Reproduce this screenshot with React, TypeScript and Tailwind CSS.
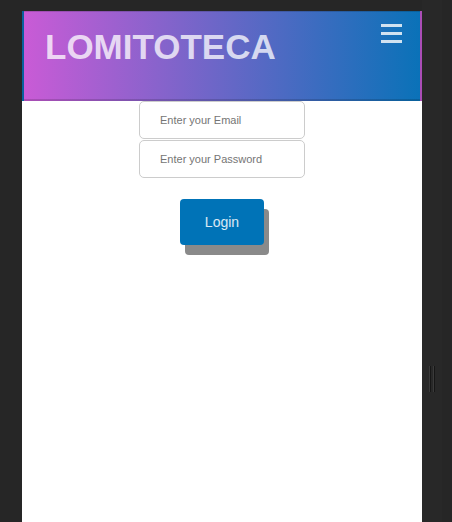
import React from "react";

export default function App() {
  return (
    <div
      className="flex w-[452px] h-[522px] overflow-hidden bg-[#262626]"
      style={{ fontFamily: '"Liberation Sans", Arial, sans-serif' }}
    >
      <div className="w-[22px] shrink-0" />
      <div className="w-[400px] shrink-0 mt-[11px] bg-white flex flex-col items-center">
        <header className="w-full h-[90px] border-black/15 border-t border-x-2 border-b-2 bg-[linear-gradient(to_right,#c95bd6,#0a72b8)] flex justify-between items-start pl-[21px] pr-[18px]">
          <h1 className="mt-[17px] text-[35px] leading-none font-bold text-white/75">
            LOMITOTECA
          </h1>
          <div className="mt-[12px] flex flex-col gap-[5px] w-[21px]">
            <div className="h-[3px] bg-white/80" />
            <div className="h-[3px] bg-white/80" />
            <div className="h-[3px] bg-white/80" />
          </div>
        </header>
        <div className="flex flex-col gap-[1px] w-[166px]">
          <input
            type="email"
            placeholder="Enter your Email"
            className="h-[38px] w-full border border-[#cccccc] rounded-[5px] pl-[20px] text-[11px] text-[#333] placeholder:text-[#757575] outline-none bg-white"
          />
          <input
            type="password"
            placeholder="Enter your Password"
            className="h-[38px] w-full border border-[#cccccc] rounded-[5px] pl-[20px] text-[11px] text-[#333] placeholder:text-[#757575] outline-none bg-white"
          />
        </div>
        <button className="mt-[21px] w-[84px] h-[46px] rounded-[4px] bg-[#0073b7] text-white/85 text-[14px] shadow-[5px_10px_0_#8a8a8a]">
          Login
        </button>
      </div>
      <div className="w-[20px] shrink-0 bg-[#282828] flex flex-col">
        <div className="h-[366px]" />
        <div className="flex gap-[2px] ml-[7px] h-[26px]">
          <div className="w-[2px] h-full bg-[#161616] border-l border-[#3a3a3a]" />
          <div className="w-[2px] h-full bg-[#161616] border-l border-[#3a3a3a]" />
        </div>
      </div>
    </div>
  );
}
